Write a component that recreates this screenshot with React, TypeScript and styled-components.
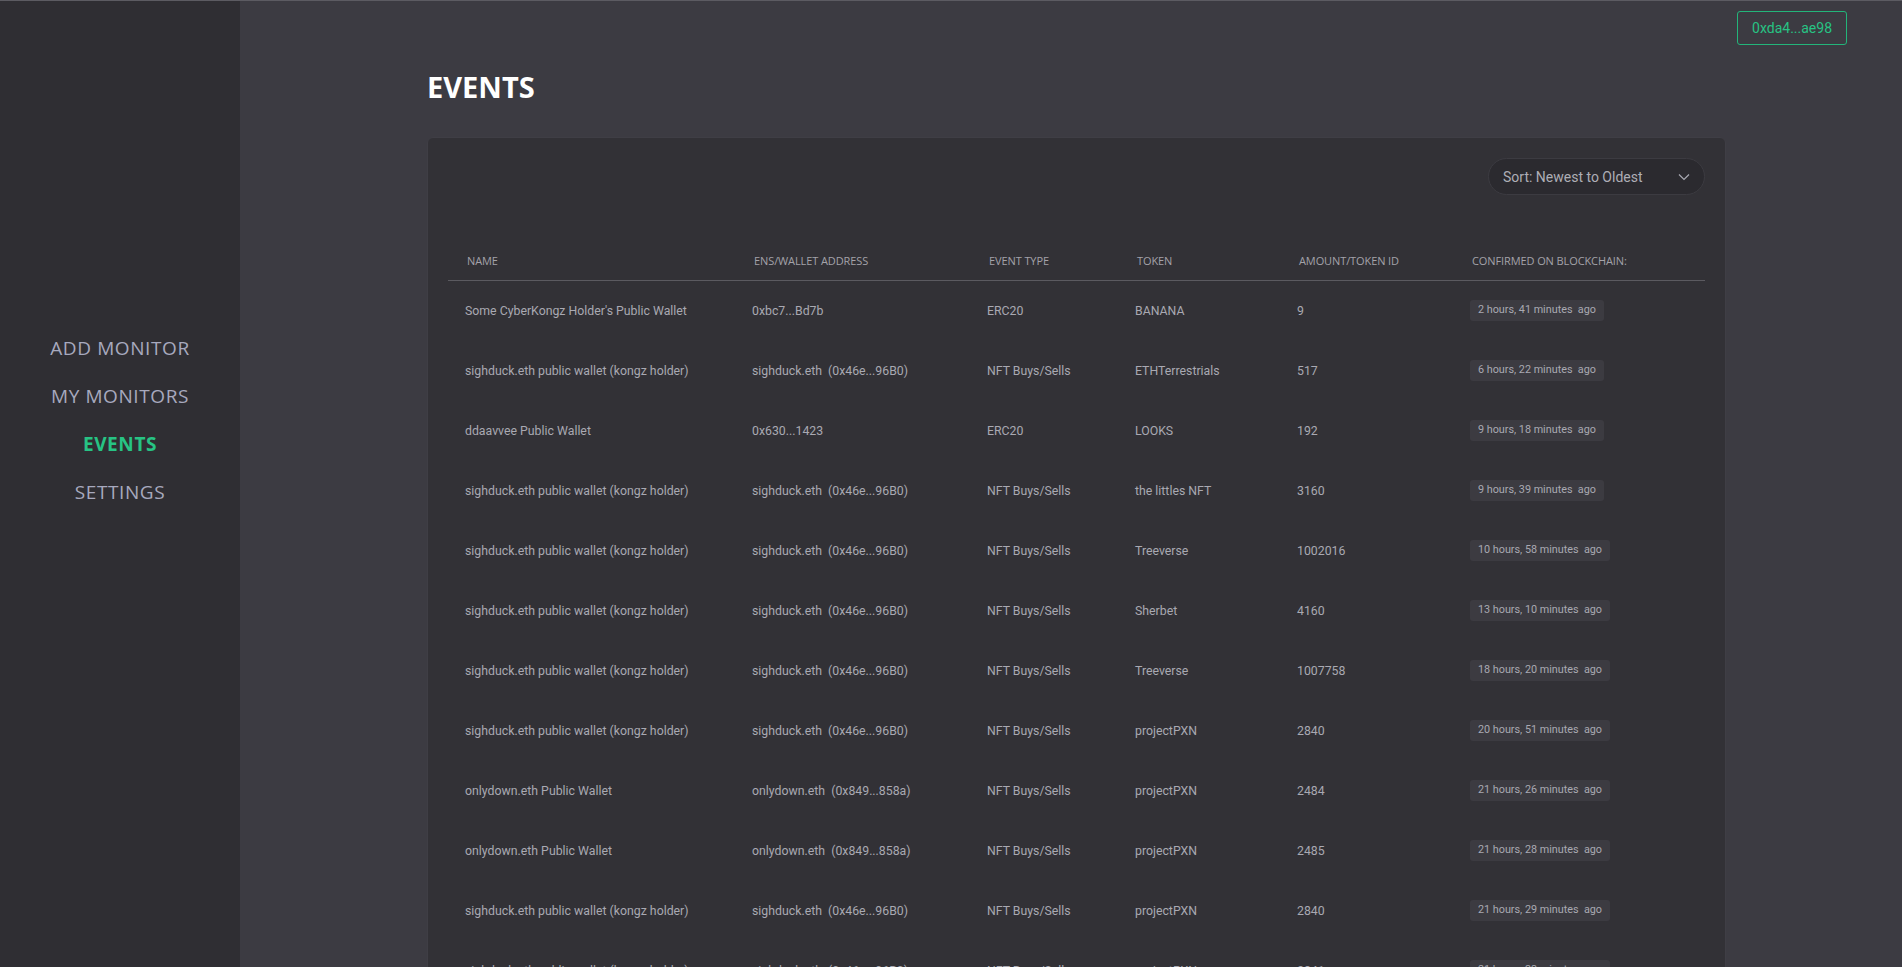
import React from "react";
import styled, { createGlobalStyle } from "styled-components";

const Global = createGlobalStyle`
  html, body { margin: 0; padding: 0; background: #3c3b42; }
  body { font-family: Roboto, "Liberation Sans", sans-serif; }
  * { box-sizing: border-box; }
`;

const Shell = styled.div`
  display: flex;
  min-height: 100vh;
  border-top: 1px solid #5c5b62;
`;

const Sidebar = styled.aside`
  width: 240px;
  flex-shrink: 0;
  background: #2f2e33;
  display: flex;
  flex-direction: column;
  align-items: center;
  padding-top: 332px;
  gap: 18px;
`;

const NavItem = styled.a<{ $active?: boolean }>`
  font-family: "Open Sans", "Liberation Sans", sans-serif;
  font-size: 19px;
  line-height: 30px;
  font-weight: ${(p) => (p.$active ? 700 : 500)};
  letter-spacing: 0.6px;
  color: ${(p) => (p.$active ? "#27c384" : "#a7a9be")};
  text-decoration: none;
  cursor: pointer;
`;

const Main = styled.main`
  flex: 1;
  display: flex;
  flex-direction: column;
  padding: 10px 55px 0 187px;
`;

const TopBar = styled.div`
  display: flex;
  justify-content: flex-end;
`;

const WalletButton = styled.button`
  height: 34px;
  padding: 0 14px;
  background: transparent;
  border: 1px solid #23b57a;
  border-radius: 3px;
  color: #27c384;
  font-family: Roboto, "Liberation Sans", sans-serif;
  font-size: 14px;
`;

const Title = styled.h1`
  margin: 22px 0 0;
  font-family: "Open Sans", "Liberation Sans", sans-serif;
  font-weight: 700;
  font-size: 29px;
  line-height: 40px;
  color: #ffffff;
`;

const Card = styled.section`
  margin-top: 30px;
  width: 1299px;
  background: #323136;
  border: 1px solid #3f3e45;
  border-radius: 6px;
  padding: 20px 20px 0 20px;
`;

const CardHeader = styled.div`
  display: flex;
  justify-content: flex-end;
`;

const SortSelect = styled.div`
  width: 217px;
  height: 37px;
  border-radius: 19px;
  border: 1px solid #3c3b41;
  background: #2b2a2f;
  display: flex;
  align-items: center;
  justify-content: space-between;
  padding: 0 14px 0 14px;
  color: #aeaeb6;
  font-size: 14px;
`;

const Table = styled.div`
  margin-top: 46px;
  display: flex;
  flex-direction: column;
`;

const Grid = styled.div`
  display: grid;
  grid-template-columns: 287px 235px 148px 162px 173px 252px;
`;

const HeadRow = styled(Grid)`
  height: 40px;
  align-items: center;
  border-bottom: 1px solid #5b5a60;
`;

const HeadCell = styled.div`
  padding-left: 19px;
  font-family: "Open Sans", "Liberation Sans", sans-serif;
  font-size: 11px;
  color: #a3a2a9;
  text-transform: uppercase;
  letter-spacing: -0.1px;
`;

const Row = styled(Grid)`
  height: 60px;
  align-items: center;
`;

const Cell = styled.div`
  padding-left: 17px;
  font-size: 12.3px;
  color: #a9a9b2;
  white-space: pre;
`;

const Badge = styled.span`
  display: inline-block;
  background: #3c3b41;
  border-radius: 3px;
  padding: 3px 8px 0 8px;
  height: 21px;
  font-size: 10.8px;
  color: #a9a9b2;
  white-space: pre;
  position: relative;
  top: -1px;
`;

type Ev = [string, string, string, string, string, string];

const SIG = "sighduck.eth public wallet (kongz holder)";
const SIGA = "sighduck.eth  (0x46e...96B0)";
const ONL = "onlydown.eth Public Wallet";
const ONLA = "onlydown.eth  (0x849...858a)";
const NFT = "NFT Buys/Sells";

const events: Ev[] = [
  ["Some CyberKongz Holder's Public Wallet", "0xbc7...Bd7b", "ERC20", "BANANA", "9", "2 hours, 41 minutes  ago"],
  [SIG, SIGA, NFT, "ETHTerrestrials", "517", "6 hours, 22 minutes  ago"],
  ["ddaavvee Public Wallet", "0x630...1423", "ERC20", "LOOKS", "192", "9 hours, 18 minutes  ago"],
  [SIG, SIGA, NFT, "the littles NFT", "3160", "9 hours, 39 minutes  ago"],
  [SIG, SIGA, NFT, "Treeverse", "1002016", "10 hours, 58 minutes  ago"],
  [SIG, SIGA, NFT, "Sherbet", "4160", "13 hours, 10 minutes  ago"],
  [SIG, SIGA, NFT, "Treeverse", "1007758", "18 hours, 20 minutes  ago"],
  [SIG, SIGA, NFT, "projectPXN", "2840", "20 hours, 51 minutes  ago"],
  [ONL, ONLA, NFT, "projectPXN", "2484", "21 hours, 26 minutes  ago"],
  [ONL, ONLA, NFT, "projectPXN", "2485", "21 hours, 28 minutes  ago"],
  [SIG, SIGA, NFT, "projectPXN", "2840", "21 hours, 29 minutes  ago"],
  [SIG, SIGA, NFT, "projectPXN", "2841", "21 hours, 33 minutes  ago"],
];

const headers = ["Name", "ENS/Wallet Address", "Event Type", "Token", "Amount/Token ID", "Confirmed on blockchain:"];

const Chevron = () => (
  <svg width="12" height="8" viewBox="0 0 12 8" fill="none">
    <path d="M1 1.5 L6 6.5 L11 1.5" stroke="#a9a9b2" strokeWidth="1.2" />
  </svg>
);

export default function App() {
  return (
    <>
      <Global />
      <Shell>
        <Sidebar>
          <NavItem>ADD MONITOR</NavItem>
          <NavItem>MY MONITORS</NavItem>
          <NavItem $active>EVENTS</NavItem>
          <NavItem>SETTINGS</NavItem>
        </Sidebar>
        <Main>
          <TopBar>
            <WalletButton>0xda4...ae98</WalletButton>
          </TopBar>
          <Title>EVENTS</Title>
          <Card>
            <CardHeader>
              <SortSelect>
                <span>Sort: Newest to Oldest</span>
                <Chevron />
              </SortSelect>
            </CardHeader>
            <Table>
              <HeadRow>
                {headers.map((h) => (
                  <HeadCell key={h}>{h}</HeadCell>
                ))}
              </HeadRow>
              {events.map((e, i) => (
                <Row key={i}>
                  <Cell>{e[0]}</Cell>
                  <Cell>{e[1]}</Cell>
                  <Cell>{e[2]}</Cell>
                  <Cell>{e[3]}</Cell>
                  <Cell>{e[4]}</Cell>
                  <Cell>
                    <Badge>{e[5]}</Badge>
                  </Cell>
                </Row>
              ))}
            </Table>
          </Card>
        </Main>
      </Shell>
    </>
  );
}
